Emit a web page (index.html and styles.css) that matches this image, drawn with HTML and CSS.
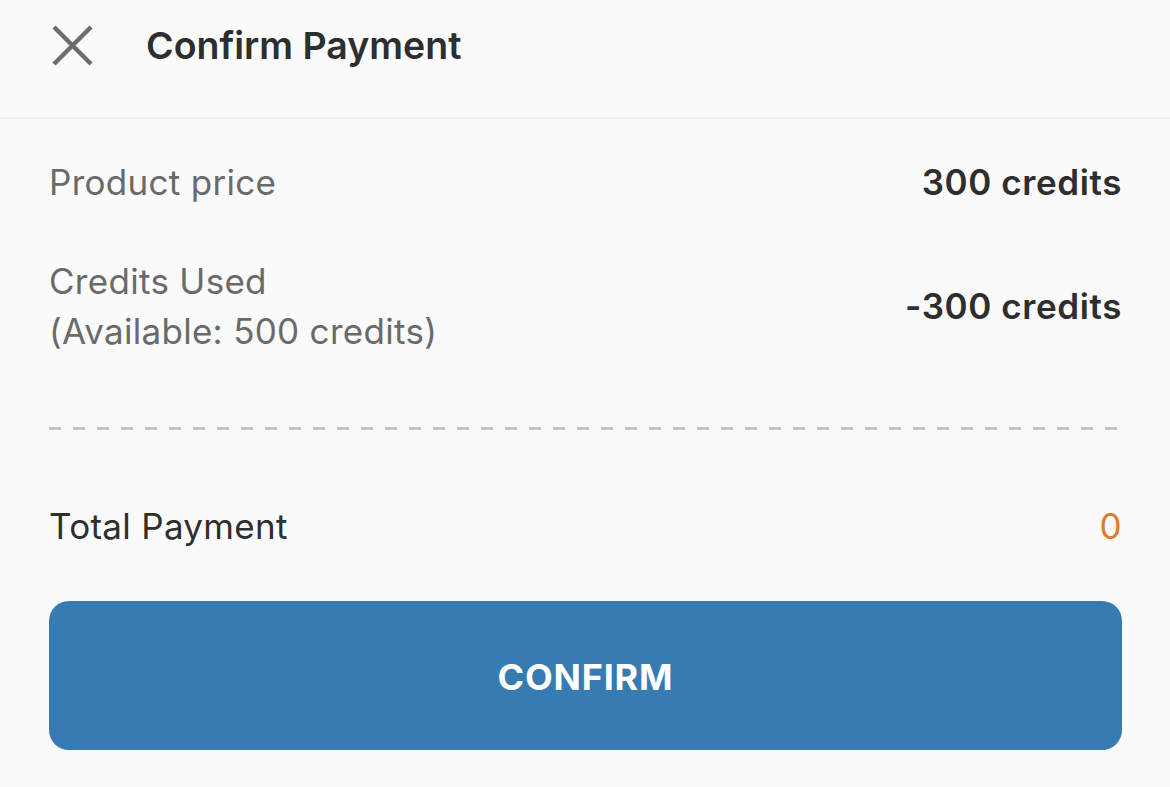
FILE: index.html
```html
<!DOCTYPE html>
<html>
<head>
<meta charset="utf-8">
<link rel="stylesheet" href="styles.css">
</head>
<body>
<div class="sheet">
  <header class="header">
    <svg class="close" viewBox="0 0 41 41" width="41" height="41" aria-hidden="true">
      <path d="M2 2 L39 39 M39 2 L2 39" stroke="#6b6b6b" stroke-width="4.4" stroke-linecap="butt" fill="none"/>
    </svg>
    <h1 class="title">Confirm Payment</h1>
  </header>
  <main class="content">
    <div class="row row-price">
      <span class="label">Product price</span>
      <span class="value">300 credits</span>
    </div>
    <div class="row row-used">
      <span class="label">Credits Used<br>(Available: 500 credits)</span>
      <span class="value">-300 credits</span>
    </div>
    <div class="dashed"></div>
    <div class="row row-total">
      <span class="label dark">Total Payment</span>
      <span class="total">0</span>
    </div>
    <button class="confirm">CONFIRM</button>
  </main>
</div>
</body>
</html>
```

FILE: styles.css
```css
html, body {
  margin: 0;
  padding: 0;
  background: #fafafa;
}
body {
  font-family: Inter, "Noto Sans", sans-serif;
  color: #333;
}
.sheet {
  width: 1170px;
  height: 787px;
  overflow: hidden;
}
.header {
  height: 117px;
  border-bottom: 2px solid #efefef;
  display: flex;
  align-items: flex-start;
  padding-left: 52px;
  box-sizing: content-box;
}
.close {
  margin-top: 25px;
  flex: none;
}
.title {
  margin: 21px 0 0 53px;
  font-size: 37.5px;
  line-height: 50px;
  font-weight: 600;
  color: #2e2e2e;
  letter-spacing: 0;
}
.content {
  padding: 38px 48px 0 49px;
  display: flex;
  flex-direction: column;
}
.row {
  display: flex;
  justify-content: space-between;
  align-items: center;
  font-size: 35px;
  line-height: 50px;
  letter-spacing: 0.3px;
}
.row-used {
  margin-top: 49px;
}
.label {
  color: #6a6a6a;
}
.label.dark {
  color: #2e2e2e;
}
.value {
  font-weight: 600;
  color: #2e2e2e;
  letter-spacing: 0.6px;
}
.dashed {
  margin-top: 71px;
  height: 3px;
  background-image: linear-gradient(to right, #c4c4c4 0 12px, transparent 12px 24px);
  background-size: 24px 3px;
  background-repeat: repeat-x;
  width: 1068px;
}
.row-total {
  margin-top: 71px;
}
.total {
  color: #e07b2a;
}
.confirm {
  margin-top: 50px;
  height: 149px;
  width: 100%;
  border: none;
  border-radius: 20px;
  background: #377bb3;
  color: #fff;
  font-family: Inter, "Noto Sans", sans-serif;
  font-size: 36px;
  font-weight: 700;
  letter-spacing: 0.8px;
  padding: 2px 0 0 0;
}
```
